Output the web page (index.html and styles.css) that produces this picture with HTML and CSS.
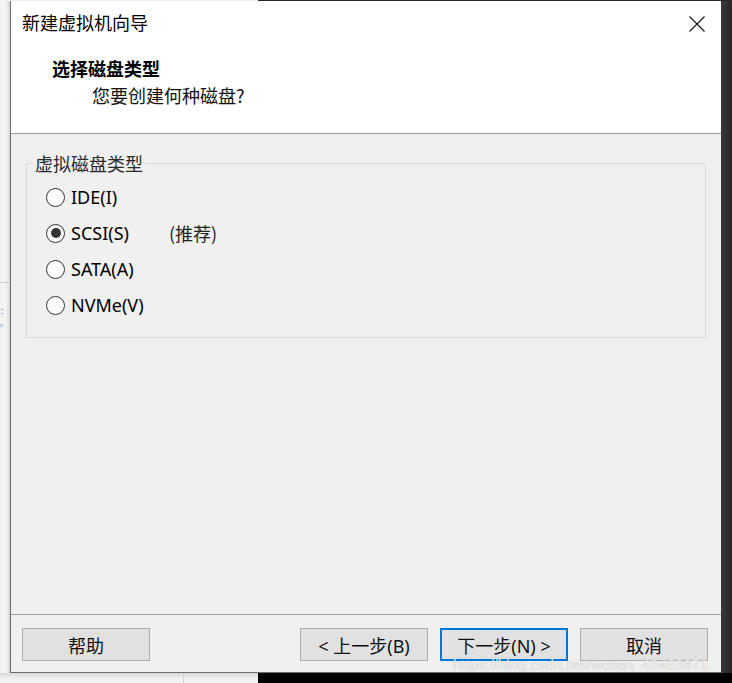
FILE: index.html
```html
<!DOCTYPE html>
<html lang="zh-CN">

<head>
    <meta charset="UTF-8">
    <title>新建虚拟机向导</title>
    <link rel="stylesheet" href="styles.css">
</head>

<body>

    <div class="edge-row edge-top">
        <div class="edge-light"></div>
        <div class="edge-dark"></div>
    </div>

    <div class="desktop">
        <div class="side-left">
            <div class="side-left-top"></div>
            <span class="side-left-text">：</span>
            <span class="side-left-text">。</span>
        </div>

        <div class="dialog">
            <header class="wizard-head">
                <div class="title-row">
                    <span class="title">新建虚拟机向导</span>
                    <span class="close">
                        <svg width="16" height="16" viewBox="0 0 16 16">
                            <path d="M0.5 0.5 L15.5 15.5 M15.5 0.5 L0.5 15.5" stroke="#111" stroke-width="1.1" fill="none" />
                        </svg>
                    </span>
                </div>
                <h1 class="step-title">选择磁盘类型</h1>
                <p class="step-sub">您要创建何种磁盘?</p>
            </header>

            <section class="wizard-body">
                <fieldset class="group">
                    <legend>虚拟磁盘类型</legend>

                    <div class="options">
                        <div class="option">
                            <span class="radio"></span>
                            <span class="opt-name">IDE(I)</span>
                        </div>
                        <div class="option">
                            <span class="radio checked"></span>
                            <span class="opt-name">SCSI(S)</span>
                            <span class="opt-note">(推荐)</span>
                        </div>
                        <div class="option">
                            <span class="radio"></span>
                            <span class="opt-name">SATA(A)</span>
                        </div>
                        <div class="option">
                            <span class="radio"></span>
                            <span class="opt-name">NVMe(V)</span>
                        </div>
                    </div>
                </fieldset>
            </section>

            <footer class="wizard-foot">
                <button class="btn">帮助</button>
                <div class="btn-group">
                    <button class="btn">&lt; 上一步(B)</button>
                    <button class="btn btn-default">下一步(N) &gt;</button>
                    <button class="btn">取消</button>
                </div>
                <span class="watermark">https://blog.csdn.net/weixin_42463871</span>
            </footer>
        </div>

        <div class="side-right"></div>
    </div>

    <div class="edge-row edge-bottom">
        <div class="edge-light">
            <div class="edge-split"></div>
        </div>
        <div class="edge-dark"></div>
    </div>

</body>

</html>
```

FILE: styles.css
```css
* {
    margin: 0;
    padding: 0;
    box-sizing: border-box;
}

body {
    width: 732px;
    height: 683px;
    overflow: hidden;
    background-color: #1f1f1f;
    font-family: "Noto Sans", "Noto Sans CJK SC", sans-serif;
    color: #000;
}

/* strips around the dialog */
.edge-row {
    display: flex;
}

.edge-top {
    height: 1px;
}

.edge-bottom {
    height: 10px;
}

.edge-light {
    width: 258px;
    background: linear-gradient(to bottom, #d9d9d9, #f2f2f2 60%);
}

.edge-top .edge-light {
    background: #f0f0f0;
}

.edge-split {
    margin-left: 183px;
    width: 1px;
    height: 100%;
    background-color: #d4d4d4;
}

.edge-dark {
    flex: 1;
    background-color: #000;
}

.edge-top .edge-dark {
    background-color: #2a2a2a;
}

.desktop {
    display: flex;
    height: 672px;
}

.side-left {
    width: 10px;
    background: linear-gradient(to right, #f3f3f3 60%, #d6d6d6);
}

.side-left-top {
    height: 282px;
    border-bottom: 1px solid #d0d0d0;
    margin-bottom: 22px;
}

.side-left-text {
    display: block;
    font-family: "Noto Sans CJK SC", sans-serif;
    font-size: 8px;
    line-height: 12px;
    color: #5a7fb0;
}

.side-right {
    flex: 1;
    background: linear-gradient(to right, #3a3a3a, #262626);
}

/* dialog */
.dialog {
    width: 711px;
    display: flex;
    flex-direction: column;
    background-color: #f0f0f0;
    border-left: 1px solid #6f6f6f;
    border-bottom: 1px solid #6f6f6f;
    overflow: hidden;
}

.wizard-head {
    height: 133px;
    background-color: #fff;
    border-bottom: 1px solid #a0a0a0;
    padding-top: 9px;
}

.title-row {
    display: flex;
    justify-content: space-between;
    align-items: center;
    padding: 0 16px 0 11px;
    height: 24px;
}

.title {
    font-family: "Noto Sans CJK SC", sans-serif;
    font-size: 18px;
    line-height: 24px;
}

.close {
    display: flex;
    margin-top: 3px;
}

.step-title {
    font-family: "Noto Sans CJK SC", sans-serif;
    font-size: 18px;
    font-weight: bold;
    line-height: 24px;
    margin-top: 22px;
    padding-left: 41px;
}

.step-sub {
    font-family: "Noto Sans CJK SC", sans-serif;
    font-size: 18px;
    line-height: 24px;
    margin-top: 3px;
    padding-left: 81px;
    color: #111;
}

/* group box */
.wizard-body {
    flex: 1;
    padding-top: 17px;
}

.group {
    margin: 0 15px;
    border: 1px solid #dadada;
    padding: 0;
}

.group legend {
    margin-left: 6px;
    padding: 0 2px;
    font-family: "Noto Sans CJK SC", sans-serif;
    font-size: 18px;
    line-height: 24px;
    color: #2b2b2b;
}

.options {
    padding: 4px 0 14px 19px;
}

.option {
    display: flex;
    align-items: center;
    height: 36px;
    font-size: 18px;
}

.radio {
    width: 19px;
    height: 19px;
    border: 1.5px solid #333;
    border-radius: 50%;
    background-color: #fff;
    display: flex;
    align-items: center;
    justify-content: center;
    margin-right: 6px;
}

.radio.checked::after {
    content: "";
    width: 10px;
    height: 10px;
    border-radius: 50%;
    background-color: #333;
}

.opt-name {
    width: 98px;
    line-height: 24px;
}

.opt-note {
    font-family: "Noto Sans CJK SC", sans-serif;
    line-height: 24px;
    color: #222;
}

/* footer buttons */
.wizard-foot {
    position: relative;
    height: 58px;
    border-top: 1px solid #a0a0a0;
    display: flex;
    justify-content: space-between;
    align-items: flex-start;
    padding: 13px 13px 0 11px;
}

.btn-group {
    display: flex;
    gap: 12px;
}

.btn {
    width: 128px;
    height: 33px;
    background-color: #e1e1e1;
    border: 1px solid #adadad;
    font-family: "Noto Sans", "Noto Sans CJK SC", sans-serif;
    font-size: 18px;
    color: #111;
}

.btn-default {
    border: 2px solid #0078d7;
}

.watermark {
    position: absolute;
    left: 442px;
    top: 41px;
    font-family: "Liberation Sans", Arial, sans-serif;
    font-size: 15px;
    line-height: 18px;
    color: rgba(255, 255, 255, 0.8);
    text-shadow: 0 0 1px rgba(110, 110, 110, 0.6);
    white-space: nowrap;
}
```
